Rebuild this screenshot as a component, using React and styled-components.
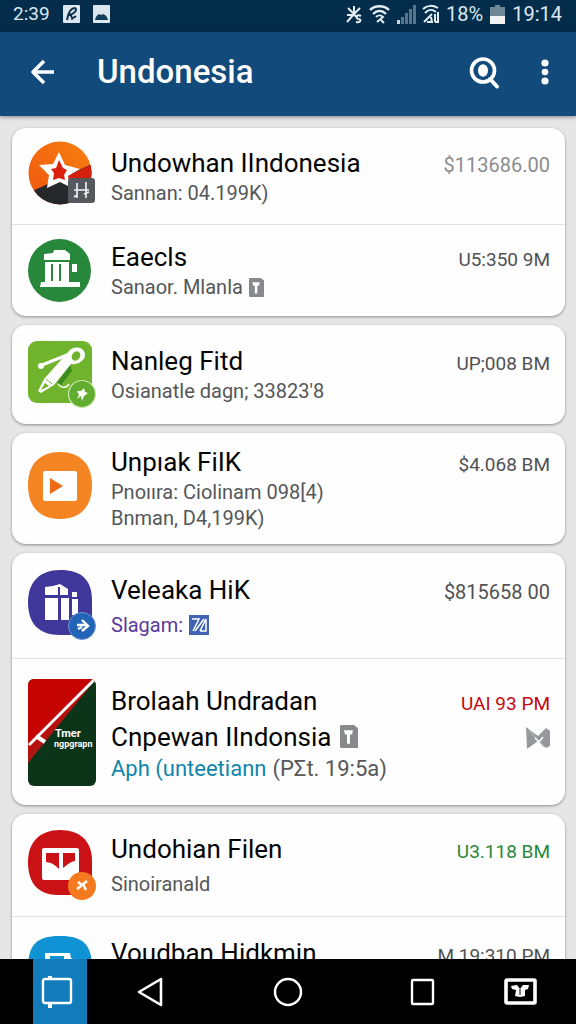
import React from "react";
import styled, { createGlobalStyle } from "styled-components";

const GlobalStyle = createGlobalStyle`
  *, *::before, *::after { box-sizing: border-box; }
  body {
    margin: 0;
    background: #e6e6e7;
    font-family: Roboto, "Liberation Sans", sans-serif;
  }
  svg { display: block; flex: none; overflow: visible; }
`;

const Screen = styled.div`
  height: 100vh;
  display: flex;
  flex-direction: column;
`;

const StatusBar = styled.div`
  flex: none;
  height: 32px;
  padding: 0 14px 4px 13px;
  display: flex;
  align-items: center;
  justify-content: space-between;
  background: #042d4b;
  color: #dbe8f0;
`;

const StatusGroup = styled.div`
  display: flex;
  align-items: center;
  gap: ${(p) => p.$gap}px;
`;

const StatusText = styled.span`
  font-size: ${(p) => p.$size}px;
  line-height: 24px;
`;

const AppBar = styled.header`
  flex: none;
  height: 84px;
  padding: 0 15px 4px 26px;
  display: flex;
  align-items: center;
  background: #114a7b;
  color: #fff;
  box-shadow: 0 1px 4px rgba(30, 30, 60, 0.5);
  z-index: 1;
`;

const AppTitle = styled.h1`
  margin: 0 0 0 38px;
  flex: 1;
  font-size: 33px;
  font-weight: 500;
  line-height: 40px;
`;

const IconButton = styled.button`
  width: ${(p) => p.$width}px;
  height: 48px;
  padding: 0;
  border: 0;
  background: none;
  color: inherit;
  display: flex;
  align-items: center;
  justify-content: center;
`;

const List = styled.main`
  flex: 1;
  min-height: 0;
  overflow-y: auto;
  scrollbar-width: none;
  padding: 12px 11px 12px 12px;
  display: flex;
  flex-direction: column;
  gap: 9px;
`;

const Card = styled.section`
  flex: none;
  background: #fefefe;
  border-radius: 14px;
  box-shadow: 0 1px 3px rgba(0, 0, 0, 0.4);
`;

const Thumb = styled.div`
  flex: none;
  width: 83px;
`;

const Row = styled.article`
  min-height: ${(p) => p.$height}px;
  padding: 0 15px 0 16px;
  display: flex;
  align-items: center;
  & + & { border-top: 1px solid #e0e2e2; }
  &:first-child ${Thumb} { padding-bottom: 6px; }
`;

const Content = styled.div`
  flex: 1;
  min-width: 0;
  display: flex;
  align-items: baseline;
  justify-content: space-between;
`;

const Title = styled.h2`
  margin: 0;
  font-size: 26px;
  font-weight: 400;
  line-height: ${(p) => (p.$tall ? 36 : 32)}px;
  color: #050505;
  white-space: nowrap;
`;

const TitleLine = styled.span`
  display: flex;
  align-items: center;
  gap: 9px;
`;

const Details = styled.div`
  margin-top: ${(p) => (p.$relaxed ? 6 : 1)}px;
`;

const Detail = styled.p`
  margin: 0;
  display: flex;
  align-items: center;
  gap: 6px;
  font-size: ${(p) => p.$size || 20}px;
  line-height: 26px;
  color: #555759;
  white-space: nowrap;
`;

const DetailLink = styled.a`
  color: ${(p) => p.$color};
  text-decoration: none;
`;

const Aside = styled.div`
  flex: none;
  display: flex;
  flex-direction: column;
  align-items: flex-end;
  gap: 10px;
`;

const Amount = styled.span`
  font-size: ${(p) => p.$size || 19}px;
  line-height: 26px;
  color: ${(p) => p.$color || "#505254"};
`;

const NavBar = styled.nav`
  flex: none;
  height: 65px;
  padding: 0 17px 0 33px;
  display: grid;
  grid-template-columns: 54px 126fr 150fr 118fr 78fr;
  background: #000;
`;

const NavButton = styled.button`
  border: 0;
  padding: ${(p) => (p.$active ? "0 7px 0 0" : "0")};
  display: flex;
  align-items: center;
  justify-content: center;
  background: ${(p) => (p.$active ? "#127cbb" : "transparent")};
  color: #fff;
`;

function NoteIcon() {
  return (
    <svg width="17" height="18" viewBox="0 0 17 18" aria-hidden="true">
      <rect width="17" height="18" rx="1" fill="#dbe6ee" />
      <path d="M4 15 C5 9 7 3 12 3 C15 5 11 9 6 10 M8 10 C8 13 10 14 13 11" fill="none" stroke="#0d2f49" strokeWidth="2" />
      <circle cx="9" cy="14" r="1" fill="#0d2f49" />
    </svg>
  );
}

function PhotoIcon() {
  return (
    <svg width="17" height="18" viewBox="0 0 17 18" aria-hidden="true">
      <rect width="17" height="18" rx="1" fill="#dbe6ee" />
      <path d="M2 15 C3 11 5 8 8 10 C11 8 14 11 15 15 Z" fill="#123c5c" />
    </svg>
  );
}

function BluetoothIcon() {
  return (
    <svg width="16" height="19" viewBox="0 0 16 19" fill="none" stroke="#e3edf3" strokeWidth="2" aria-hidden="true">
      <path d="M2 3 L8 9 L14 3 M1 10 H9 M8 1 V9 L1 17 M8 9 L10 12" />
      <path d="M15 11 C11 9 9 12 12 14 C16 14 15 18 10 17" />
    </svg>
  );
}

function WifiIcon() {
  return (
    <svg width="21" height="19" viewBox="0 0 21 19" fill="none" stroke="#e3edf3" strokeWidth="2.4" aria-hidden="true">
      <path d="M1 5 C6 0 15 0 20 5 M4 9 C8 5 13 5 17 9" />
      <path d="M7 12 C9 10 12 10 14 12 L8 17 M12 15 L15 18" strokeWidth="2" />
    </svg>
  );
}

function SignalIcon() {
  return (
    <svg width="19" height="19" viewBox="0 0 19 19" aria-hidden="true">
      <path d="M0 15 H3 V19 H0 Z" fill="#c9d6de" />
      <path d="M4 12 H7 V19 H4 Z M8 8 H11 V19 H8 Z M12 4 H15 V19 H12 Z M16 0 H19 V19 H16 Z" fill="#57758b" />
    </svg>
  );
}

function DataIcon() {
  return (
    <svg width="16" height="18" viewBox="0 0 16 18" fill="none" stroke="#e3edf3" strokeWidth="2" aria-hidden="true">
      <path d="M0 4 C4 0 10 0 15 3 M2 8 C6 4 9 4 13 7 M1 17 L9 9 M4 17 H9 L8 12 M12 9 V17 M15 7 V17 H12" />
    </svg>
  );
}

function BatteryIcon() {
  return (
    <svg width="15" height="19" viewBox="0 0 15 19" aria-hidden="true">
      <path d="M5 0 H10 V2 H15 V19 H0 V2 H5 Z" fill="#6f8898" />
      <rect y="11" width="15" height="8" fill="#f0f4f6" />
    </svg>
  );
}

function BackArrow() {
  return (
    <svg width="26" height="28" viewBox="0 0 26 28" fill="none" stroke="#fff" strokeWidth="3.6" aria-hidden="true">
      <path d="M24 14 H3 M14 3 L3 14 L14 25" strokeLinejoin="round" />
    </svg>
  );
}

function SearchIcon() {
  return (
    <svg width="30" height="31" viewBox="0 0 30 31" aria-hidden="true">
      <circle cx="14" cy="13.5" r="11.5" fill="none" stroke="#fff" strokeWidth="3.6" />
      <ellipse cx="14" cy="13.5" rx="5" ry="6.2" fill="#fff" />
      <path d="M21 22 L28 29.5" stroke="#fff" strokeWidth="4" strokeLinecap="round" />
    </svg>
  );
}

function MoreIcon() {
  return (
    <svg width="8" height="26" viewBox="0 0 8 26" fill="#fff" aria-hidden="true">
      <circle cx="4" cy="4" r="3.6" />
      <circle cx="4" cy="13" r="3.3" />
      <circle cx="4" cy="22" r="3.6" />
    </svg>
  );
}

function StarLogo() {
  return (
    <svg width="68" height="64" viewBox="0 0 68 64" aria-hidden="true">
      <defs>
        <clipPath id="star-disc"><circle cx="32" cy="32" r="31.5" /></clipPath>
        <linearGradient id="star-sky" x1="0" y1="1" x2="1" y2="0">
          <stop offset="0" stopColor="#f0530e" />
          <stop offset="1" stopColor="#f6820f" />
        </linearGradient>
      </defs>
      <g clipPath="url(#star-disc)">
        <rect width="64" height="64" fill="url(#star-sky)" />
        <path d="M0 52 L64 23 V64 H0 Z" fill="#25272a" />
        <path d="M37 36 L64 23 V40 H42 Z" fill="#d3200f" />
      </g>
      <path d="M31 11 L37 24 L52 28 L40 35 L42 46 L32 41 L19 47 L21 34 L11 24 L25 23 Z" fill="#fff" />
      <path d="M31 19 L35 27 L39 29 L36 34 L37 39 L31 37 L25 39 L26 32 L23 28 L28 27 Z" fill="#dd200d" />
      <rect x="40" y="37" width="27" height="25" rx="3" fill="#55595e" />
      <path d="M49 42 V57 M58 41 V57 M46 49 H61 M46 56 L49 54 M56 53 L61 51" stroke="#f3f3f3" strokeWidth="1.6" fill="none" />
    </svg>
  );
}

function BankLogo() {
  return (
    <svg width="64" height="64" viewBox="0 0 64 64" aria-hidden="true">
      <circle cx="31.5" cy="31.5" r="31.5" fill="#27883c" />
      <g fill="#fff">
        <path d="M16 15 L25 14 L26 11 H37 L42 15 V21 H16 Z" />
        <path d="M17 23 H41 V44 H17 Z" />
        <rect x="44" y="25" width="5" height="8" />
        <path d="M13 43 H52 V48 H12 Z" />
      </g>
      <path d="M24 25 V42 M32 25 V42" stroke="#27883c" strokeWidth="2" />
    </svg>
  );
}

function PinLogo() {
  return (
    <svg width="68" height="68" viewBox="0 0 68 68" aria-hidden="true">
      <rect y="3" width="64" height="62" rx="9" fill="#70b32c" />
      <g transform="translate(0 3)">
        <path d="M14 24 L44 12" stroke="#fff" strokeWidth="3" strokeLinecap="round" />
        <circle cx="13" cy="25" r="3" fill="#fff" />
        <path d="M30 42 C32 47 38 48 41 43" fill="none" stroke="#f3ffe8" strokeWidth="1.6" />
        <path d="M42 24 L29 42 L33 44 L44 30 Z" fill="#3d8a1e" />
        <path d="M41 10 C46 4 57 6 57 14 C57 20 49 24 43 23 L26 44 L13 52 L10 50 L16 38 Z" fill="#fff" />
        <ellipse cx="48" cy="15" rx="4" ry="5" transform="rotate(35 48 15)" fill="#70b32c" />
        <path d="M13 49 L17 42 L21 45 Z" fill="#70b32c" />
        <path d="M18 38 L24 43" stroke="#70b32c" />
        <circle cx="54" cy="53" r="13.5" fill="#62ad2f" stroke="#cbe8ae" strokeWidth="1.2" />
        <path d="M49 50 H53 L56 47 L57 51 L60 52 L56 55 L54 60 L53 55 L49 58 L51 54 Z" fill="#fff" />
      </g>
    </svg>
  );
}

function PlayLogo() {
  return (
    <svg width="64" height="67" viewBox="0 0 64 67" aria-hidden="true">
      <path d="M32 0 C52 0 64 12 64 33 C64 55 52 67 32 67 C12 67 0 55 0 33 C0 12 12 0 32 0 Z" fill="#f58423" />
      <rect x="15" y="19" width="34" height="30" rx="2" fill="#fff" />
      <path d="M22 26 L35 34 L22 42 Z" fill="#ef6b14" />
    </svg>
  );
}

function GiftLogo() {
  return (
    <svg width="68" height="65" viewBox="0 0 68 65" aria-hidden="true">
      <path d="M32 0 C54 0 64 10 64 31 V65 H32 C10 65 0 53 0 32 C0 12 12 0 32 0 Z" fill="#40379b" />
      <g fill="#fff">
        <path d="M17 17 L25 16 L32 14 L40 19 V25 H17 Z" />
        <rect x="17" y="28" width="13" height="22" />
        <rect x="33" y="28" width="8" height="22" />
        <rect x="44" y="29" width="6" height="16" />
        <rect x="44" y="22" width="5" height="5" />
      </g>
      <path d="M31 17 V27" stroke="#40379b" strokeWidth="2" />
      <circle cx="54" cy="56" r="13.5" fill="#2464b6" stroke="#6d93d0" strokeWidth="1" />
      <path d="M49 55 H59 M54 50 L60 56 L54 61 M50 59 L54 57" fill="none" stroke="#fff" strokeWidth="2.4" />
    </svg>
  );
}

function FlagCover() {
  return (
    <svg width="68" height="107" viewBox="0 0 68 107" aria-hidden="true">
      <defs>
        <clipPath id="cover-shape"><rect width="68" height="107" rx="6" /></clipPath>
        <linearGradient id="cover-red" gradientUnits="userSpaceOnUse" x1="26" y1="34" x2="38" y2="46">
          <stop offset="0" stopColor="#c50402" />
          <stop offset="1" stopColor="#a81c18" />
        </linearGradient>
      </defs>
      <g clipPath="url(#cover-shape)">
        <rect width="68" height="107" fill="#0b3419" />
        <path d="M0 0 H68 L0 84 Z" fill="url(#cover-red)" />
        <path d="M67 0 L1 66" stroke="#fff" strokeWidth="3" />
        <path d="M8 57 L17 63" stroke="#fff" strokeWidth="4" />
      </g>
      <g fill="#fff" fontFamily="Roboto, sans-serif" fontWeight="700">
        <text x="27" y="58" fontSize="11">Tmer</text>
        <text x="26" y="68" fontSize="9">ngpgrapn</text>
      </g>
    </svg>
  );
}

function BookLogo() {
  return (
    <svg width="68" height="65" viewBox="0 0 68 65" aria-hidden="true">
      <path d="M32 0 C52 0 64 11 64 31 V65 H30 C10 65 0 53 0 32 C0 12 12 0 32 0 Z" fill="#ca1116" />
      <rect x="14" y="18" width="37" height="32" rx="2" fill="#fff" />
      <path d="M18 23 H31 V39 C28 36 25 33 18 32 Z M35 23 H47 V31 C41 32 38 36 35 38 Z" fill="#ca1116" />
      <circle cx="54" cy="56" r="14" fill="#f47a20" />
      <path d="M50 52 L54 55 L59 51 M55 54 L58 60 M53 56 L49 59" fill="none" stroke="#fff" strokeWidth="2.6" />
    </svg>
  );
}

function FolderLogo() {
  return (
    <svg width="64" height="66" viewBox="0 0 64 66" aria-hidden="true">
      <path d="M32 0 C56 0 64 9 64 33 C64 55 52 66 32 66 C12 66 0 55 0 33 C0 9 8 0 32 0 Z" fill="#1093d4" />
      <path d="M17 17 H42 L43 22 L47 24 V48 H17 Z" fill="#fff" />
      <path d="M22 20 H36 V24 H22 Z" fill="#1093d4" />
    </svg>
  );
}

function TagIcon({ width, height }) {
  return (
    <svg width={width} height={height} viewBox="0 0 18 22" preserveAspectRatio="none" aria-hidden="true">
      <path d="M1 0 H14 L18 3 V22 H1 L0 21 V1 Z" fill="#87898c" />
      <path d="M4 5 H13 L12 9 H10 V18 H7 V9 H5 Z" fill="#fff" />
    </svg>
  );
}

function SlashTagIcon() {
  return (
    <svg width="20" height="20" viewBox="0 0 20 20" fill="none" aria-hidden="true">
      <rect width="20" height="20" fill="#3f62b2" />
      <path d="M3 4 H10 L4 16 M6 16 L15 4 M11 16 L17 4 V16 H11" stroke="#fff" strokeWidth="1.5" />
    </svg>
  );
}

function BowIcon() {
  return (
    <svg width="24" height="22" viewBox="0 0 24 22" aria-hidden="true">
      <path d="M0 0 L12 9 L20 1 L24 4 V19 L20 21 L12 14 L1 22 Z" fill="#96989b" />
      <path d="M3 3 L18 20" stroke="#c4c5c6" strokeWidth="1" fill="none" />
      <path d="M9 11 L13 15 L17 10" stroke="#fff" strokeWidth="1.5" fill="none" />
    </svg>
  );
}

function CastIcon() {
  return (
    <svg width="32" height="34" viewBox="0 0 32 34" fill="none" stroke="#fff" strokeWidth="2.4" aria-hidden="true">
      <rect x="2" y="4" width="28" height="24" rx="2" />
      <path d="M9 1 V5 M9 28 V33" strokeWidth="4" />
    </svg>
  );
}

function TriangleIcon() {
  return (
    <svg width="26" height="30" viewBox="0 0 26 30" fill="none" stroke="#fff" strokeWidth="2.6" aria-hidden="true">
      <path d="M24 2 V28 L2 15 Z" strokeLinejoin="round" />
    </svg>
  );
}

function CircleIcon() {
  return (
    <svg width="30" height="30" viewBox="0 0 30 30" fill="none" stroke="#fff" strokeWidth="2.4" aria-hidden="true">
      <circle cx="15" cy="15" r="13" />
    </svg>
  );
}

function SquareIcon() {
  return (
    <svg width="25" height="28" viewBox="0 0 25 28" fill="none" stroke="#fff" strokeWidth="2.4" aria-hidden="true">
      <rect x="2" y="2" width="21" height="24" rx="1" />
    </svg>
  );
}

function KeyboardIcon() {
  return (
    <svg width="33" height="27" viewBox="0 0 33 27" aria-hidden="true">
      <rect x="2" y="2" width="29" height="23" rx="1" fill="none" stroke="#fff" strokeWidth="3.6" />
      <path d="M7 8 L13 7 L16 11 L19 7 H25 L24 11 L21 12 V18 L16 19 L11 18 L12 12 L8 11 Z" fill="#fff" />
      <path d="M16 11 V17" stroke="#000" />
    </svg>
  );
}

function Item({ height, thumb, title, tall, relaxed, details, amount, amountSize, amountColor, extra }) {
  return (
    <Row $height={height}>
      <Thumb>{thumb}</Thumb>
      <Content>
        <div>
          <Title $tall={tall}>{title}</Title>
          <Details $relaxed={relaxed}>{details}</Details>
        </div>
        <Aside>
          <Amount $size={amountSize} $color={amountColor}>{amount}</Amount>
          {extra}
        </Aside>
      </Content>
    </Row>
  );
}

export default function App() {
  return (
    <Screen>
      <GlobalStyle />
      <StatusBar>
        <StatusGroup $gap={13}>
          <StatusText $size={19}>2:39</StatusText>
          <NoteIcon />
          <PhotoIcon />
        </StatusGroup>
        <StatusGroup $gap={7}>
          <BluetoothIcon />
          <WifiIcon />
          <SignalIcon />
          <DataIcon />
          <StatusText $size={20}>18%</StatusText>
          <BatteryIcon />
          <StatusText $size={20}>19:14</StatusText>
        </StatusGroup>
      </StatusBar>

      <AppBar>
        <IconButton $width={33} aria-label="Back"><BackArrow /></IconButton>
        <AppTitle>Undonesia</AppTitle>
        <IconButton $width={90} aria-label="Search"><SearchIcon /></IconButton>
        <IconButton $width={32} aria-label="More options"><MoreIcon /></IconButton>
      </AppBar>

      <List>
        <Card>
          <Item
            height={96}
            thumb={<StarLogo />}
            title="Undowhan IIndonesia"
            details={<Detail>Sannan: 04.199K)</Detail>}
            amount="$113686.00"
            amountSize={20}
            amountColor="#8a8c8d"
          />
          <Item
            height={92}
            thumb={<BankLogo />}
            title="Eaecls"
            details={<Detail>Sanaor. Mlanla <TagIcon width={15} height={19} /></Detail>}
            amount="U5:350 9M"
          />
        </Card>

        <Card>
          <Item
            height={99}
            thumb={<PinLogo />}
            title="Nanleg Fitd"
            details={<Detail>Osianatle dagn; 33823'8</Detail>}
            amount="UP;008 BM"
          />
        </Card>

        <Card>
          <Item
            height={111}
            thumb={<PlayLogo />}
            title="Unpıak FiIK"
            details={
              <>
                <Detail>Pnoııra: Ciolinam 098[4)</Detail>
                <Detail>Bnman, D4,199K)</Detail>
              </>
            }
            amount="$4.068 BM"
          />
        </Card>

        <Card>
          <Item
            height={105}
            thumb={<GiftLogo />}
            title="Veleaka HiK"
            relaxed
            details={
              <Detail>
                <DetailLink href="#slagam" $color="#5a3a9c">Slagam:</DetailLink>
                <SlashTagIcon />
              </Detail>
            }
            amount="$815658 00"
            amountSize={20}
          />
          <Item
            height={147}
            thumb={<FlagCover />}
            title={
              <>
                Brolaah Undradan
                <TitleLine>Cnpewan IIndonsia <TagIcon width={18} height={23} /></TitleLine>
              </>
            }
            tall
            details={
              <Detail $size={22}>
                <DetailLink href="#aph" $color="#0e86ab">Aph (unteetiann</DetailLink>
                <span>(PΣt. 19:5a)</span>
              </Detail>
            }
            amount="UAI 93 PM"
            amountColor="#c3090d"
            extra={<BowIcon />}
          />
        </Card>

        <Card>
          <Item
            height={102}
            thumb={<BookLogo />}
            title="Undohian Filen"
            relaxed
            details={<Detail>Sinoiranald</Detail>}
            amount="U3.118 BM"
            amountColor="#27883c"
          />
          <Item
            height={105}
            thumb={<FolderLogo />}
            title="Voudban Hidkmin"
            relaxed
            details={<Detail>Sinoiranald</Detail>}
            amount="M 19:310 PM"
          />
        </Card>
      </List>

      <NavBar>
        <NavButton $active aria-label="Cast"><CastIcon /></NavButton>
        <NavButton aria-label="Back"><TriangleIcon /></NavButton>
        <NavButton aria-label="Home"><CircleIcon /></NavButton>
        <NavButton aria-label="Recent apps"><SquareIcon /></NavButton>
        <NavButton aria-label="Keyboard"><KeyboardIcon /></NavButton>
      </NavBar>
    </Screen>
  );
}
